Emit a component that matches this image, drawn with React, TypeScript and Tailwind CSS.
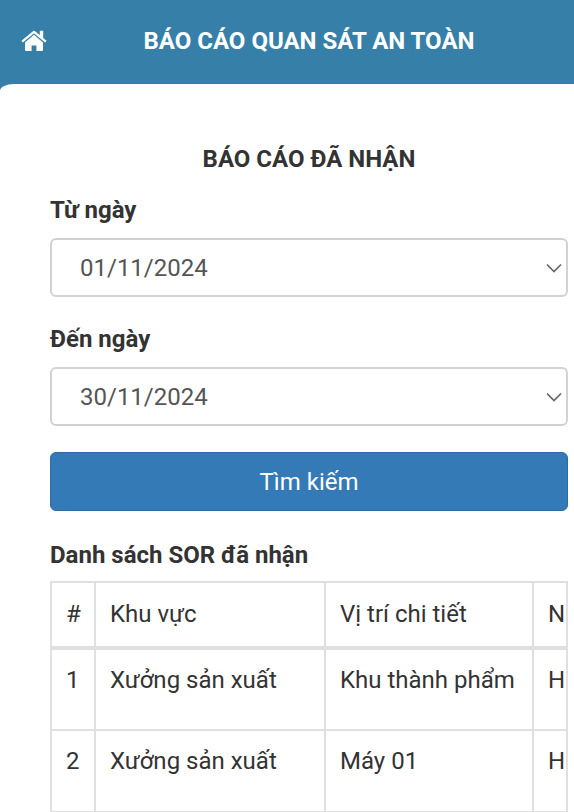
import { useState } from 'react';

interface Report {
  id: number;
  area: string;
  location: string;
  kind: string;
}

const reports: Report[] = [
  { id: 1, area: 'Xưởng sản xuất', location: 'Khu thành phẩm', kind: 'H' },
  { id: 2, area: 'Xưởng sản xuất', location: 'Máy 01', kind: 'H' },
];

interface DateFieldProps {
  id: string;
  label: string;
  value: string;
  options: string[];
  onChange: (value: string) => void;
}

function DateField({ id, label, value, options, onChange }: DateFieldProps) {
  return (
    <div className="mb-[26px]">
      <label htmlFor={id} className="mb-3 block font-bold">
        {label}
      </label>
      <div className="relative">
        <select
          id={id}
          value={value}
          onChange={(e) => onChange(e.target.value)}
          className="block h-[59px] w-full appearance-none rounded-md border-2 border-[#d2d2d2] bg-white pr-10 pl-7 text-[#555]"
        >
          {options.map((option) => (
            <option key={option}>{option}</option>
          ))}
        </select>
        <svg
          viewBox="0 0 16 10"
          className="pointer-events-none absolute top-1/2 right-1.5 h-2.5 w-4 -translate-y-1/2"
          fill="none"
          stroke="#666"
          strokeWidth="1.7"
        >
          <path d="M1 1.5 8 8.5 15 1.5" />
        </svg>
      </div>
    </div>
  );
}

function HomeIcon() {
  return (
    <svg viewBox="0 0 26 22" className="h-[22px] w-[26px]" fill="currentColor">
      <path d="M13 4.8 22 12.4V20q0 1-1 1h-5.6v-5.6h-4.8V21H5q-1 0-1-1v-7.6z" />
      <path
        d="M1.2 11.6 13 1.8 24.8 11.6"
        fill="none"
        stroke="currentColor"
        strokeWidth="2.2"
        strokeLinejoin="round"
      />
      <path d="M18.8 .8h3.4v9L18.8 7z" />
    </svg>
  );
}

export default function App() {
  const [from, setFrom] = useState('01/11/2024');
  const [to, setTo] = useState('30/11/2024');

  return (
    <div className="min-h-screen overflow-hidden bg-[#367fa9] font-[Roboto,sans-serif] text-2xl leading-8 text-[#333]">
      <header className="flex h-[84px] items-center pr-1.5 pb-0.5 pl-[21px] text-white">
        <a href="#" aria-label="Trang chủ" className="w-[29px]">
          <HomeIcon />
        </a>
        <h1 className="flex-1 text-center font-bold">BÁO CÁO QUAN SÁT AN TOÀN</h1>
      </header>

      <main className="min-h-[calc(100vh-84px)] rounded-tl-[14px_7px] bg-white pt-[59px] pr-1.5 pl-[50px]">
        <h2 className="mb-[19px] text-center font-bold">BÁO CÁO ĐÃ NHẬN</h2>

        <form onSubmit={(e) => e.preventDefault()}>
          <DateField
            id="from"
            label="Từ ngày"
            value={from}
            options={['01/11/2024', '01/10/2024']}
            onChange={setFrom}
          />
          <DateField
            id="to"
            label="Đến ngày"
            value={to}
            options={['30/11/2024', '31/10/2024']}
            onChange={setTo}
          />
          <button
            type="submit"
            className="block h-[59px] w-full rounded-md border border-[#2e6da4] bg-[#337ab7] text-white"
          >
            Tìm kiếm
          </button>
        </form>

        <h3 className="mt-7 mb-2.5 font-bold">Danh sách SOR đã nhận</h3>

        <div className="overflow-hidden border-r-2 border-[#e0e0e0]">
          <table className="w-full table-fixed border-collapse text-left whitespace-nowrap [&_td]:border-2 [&_td]:border-[#e0e0e0] [&_td:last-child]:border-r-0 [&_th]:border-2 [&_th]:border-[#e0e0e0] [&_th:last-child]:border-r-0">
            <colgroup>
              <col className="w-[44px]" />
              <col className="w-[230px]" />
              <col className="w-[208px]" />
              <col />
            </colgroup>
            <thead>
              <tr className="h-[66px] border-b-4 border-[#e0e0e0]">
                <th className="px-3.5 pb-0.5 font-normal">#</th>
                <th className="px-3.5 pb-0.5 font-normal">Khu vực</th>
                <th className="px-3.5 pb-0.5 font-normal">Vị trí chi tiết</th>
                <th className="pb-0.5 pl-3.5 font-normal">N</th>
              </tr>
            </thead>
            <tbody>
              {reports.map((report) => (
                <tr key={report.id} className="h-[82px] align-top">
                  <td className="px-3.5 pt-3.5">{report.id}</td>
                  <td className="px-3.5 pt-3.5">{report.area}</td>
                  <td className="px-3.5 pt-3.5">{report.location}</td>
                  <td className="pt-3.5 pl-3.5">{report.kind}</td>
                </tr>
              ))}
            </tbody>
          </table>
        </div>
      </main>
    </div>
  );
}
